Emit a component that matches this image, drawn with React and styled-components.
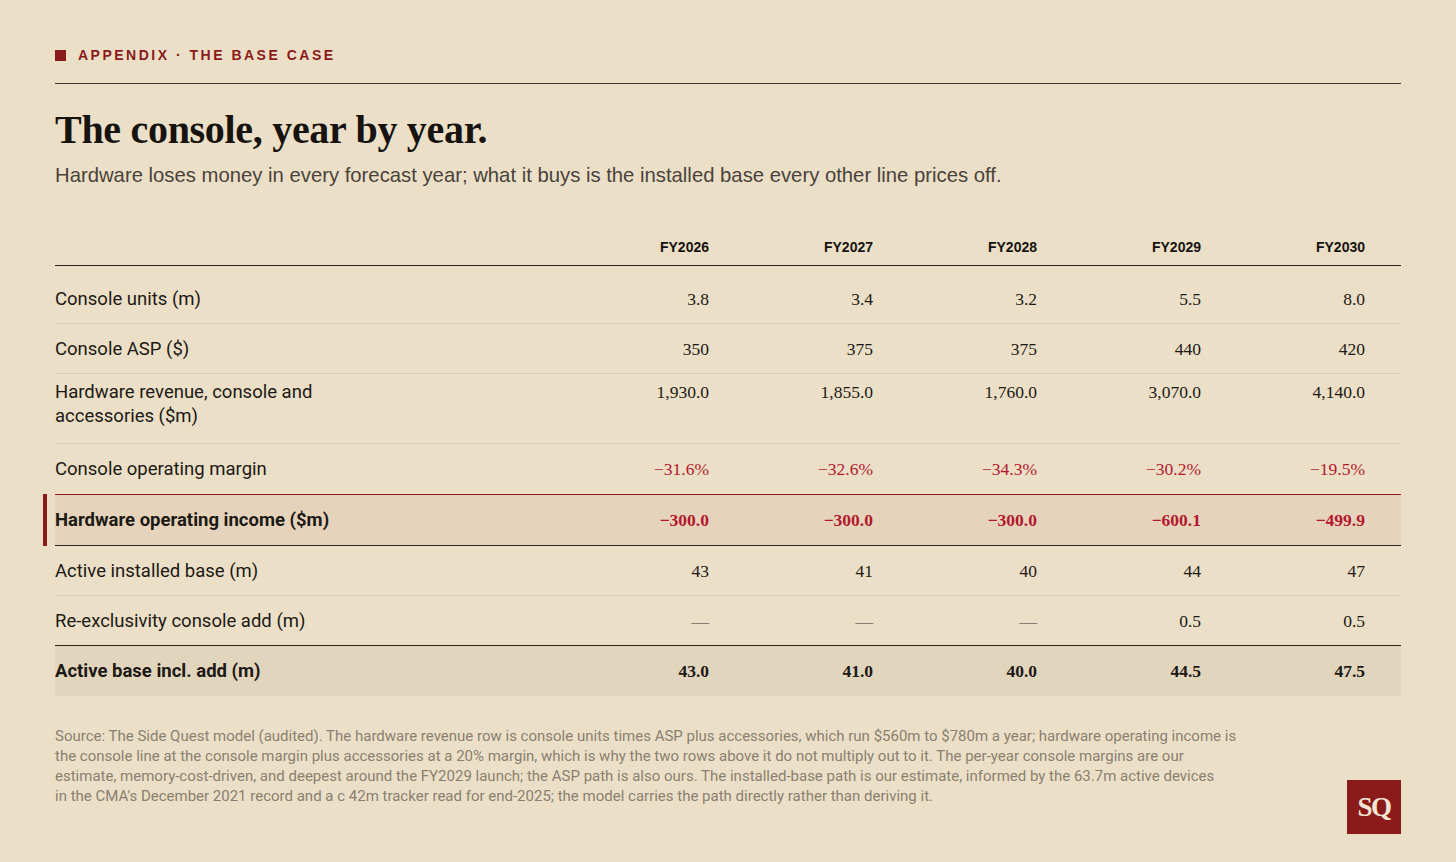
import React from 'react'
import styled, { createGlobalStyle } from 'styled-components'

const Global = createGlobalStyle`
  html, body {
    margin: 0;
    padding: 0;
    background: #EBDFC7;
  }
`

const Page = styled.div`
  width: 1456px;
  height: 862px;
  box-sizing: border-box;
  padding: 46px 55px 0 55px;
  background: #EBDFC7;
  color: #1a1612;
  font-family: Roboto, "Liberation Sans", sans-serif;
`

const Eyebrow = styled.div`
  display: flex;
  align-items: center;
  gap: 12px;
  height: 18px;
  padding-bottom: 19px;
  border-bottom: 1.5px solid #3b342b;
  font-family: "Liberation Sans", Arial, sans-serif;
  font-size: 14px;
  font-weight: 700;
  letter-spacing: 2.5px;
  color: #8B1A1A;
`

const Square = styled.span`
  width: 11px;
  height: 11px;
  background: #8B1A1A;
`

const Title = styled.h1`
  margin: 22px 0 0 0;
  font-family: "Liberation Serif", "DejaVu Serif", serif;
  font-size: 40px;
  line-height: 48px;
  font-weight: 700;
  letter-spacing: -0.3px;
  color: #17130f;
`

const Sub = styled.p`
  margin: 8px 0 0 0;
  font-family: "Liberation Sans", Arial, sans-serif;
  font-size: 20.3px;
  line-height: 26px;
  color: #4a433b;
`

const Table = styled.div`
  margin-top: 51px;
`

const Row = styled.div`
  position: relative;
  display: grid;
  grid-template-columns: 490px repeat(5, 164px) 1fr;
  align-items: ${p => (p.$top ? 'start' : 'center')};
  min-height: ${p => p.$h || 50}px;
  box-sizing: border-box;
  padding-top: ${p => p.$pt || 0}px;
  border-bottom: ${p => p.$border || '1px solid #d9cbb1'};
  background: ${p => p.$bg || 'transparent'};
`

const HeadRow = styled(Row)`
  min-height: 0;
  padding-bottom: 10px;
  border-bottom: 1.5px solid #2b251e;
`

const HiRow = styled(Row)`
  border-top: 1px solid #8B1A1A;
  &::before {
    content: '';
    position: absolute;
    left: -12px;
    top: -1px;
    bottom: -1px;
    width: 4px;
    background: #8B1A1A;
  }
`

const Head = styled.div`
  text-align: right;
  font-family: "Liberation Sans", Arial, sans-serif;
  font-size: 14px;
  font-weight: 700;
  color: #17130f;
`

const Label = styled.div`
  max-width: 300px;
  font-size: 18.5px;
  line-height: 24px;
  font-weight: ${p => (p.$bold ? 700 : 400)};
  color: #1d1914;
  padding: ${p => (p.$top ? '6px 0 11px' : '0')};
`

const Val = styled.div`
  text-align: right;
  font-family: "Liberation Serif", "DejaVu Serif", serif;
  font-size: 17.5px;
  line-height: 24px;
  font-weight: ${p => (p.$bold ? 700 : 400)};
  color: ${p => (p.$neg ? '#B3182E' : p.$dash ? '#8a8174' : '#1d1914')};
  padding-top: ${p => (p.$top ? '6px' : '0')};
`

const Note = styled.p`
  margin: 30px 0 0 0;
  max-width: 1220px;
  font-size: 15px;
  line-height: 20px;
  color: #8a7f70;
`

const Bottom = styled.div`
  display: flex;
  justify-content: space-between;
  align-items: flex-start;
`

const Logo = styled.div`
  flex: none;
  width: 54px;
  height: 54px;
  margin-top: 84px;
  background: #8B1A1A;
  display: flex;
  align-items: center;
  justify-content: center;
  font-family: "Liberation Serif", "DejaVu Serif", serif;
  font-weight: 700;
  font-size: 27px;
  letter-spacing: -1.5px;
  color: #f1e6d3;
`

const years = ['FY2026', 'FY2027', 'FY2028', 'FY2029', 'FY2030']

const rows = [
  { label: 'Console units (m)', vals: ['3.8', '3.4', '3.2', '5.5', '8.0'], pt: 8, h: 58 },
  { label: 'Console ASP ($)', vals: ['350', '375', '375', '440', '420'] },
  { label: 'Hardware revenue, console and accessories ($m)', vals: ['1,930.0', '1,855.0', '1,760.0', '3,070.0', '4,140.0'], top: true, h: 70 },
  { label: 'Console operating margin', vals: ['\u221231.6%', '\u221232.6%', '\u221234.3%', '\u221230.2%', '\u221219.5%'], neg: true, border: 'none' },
  { label: 'Hardware operating income ($m)', vals: ['\u2212300.0', '\u2212300.0', '\u2212300.0', '\u2212600.1', '\u2212499.9'], neg: true, bold: true, hi: true },
  { label: 'Active installed base (m)', vals: ['43', '41', '40', '44', '47'] },
  { label: 'Re-exclusivity console add (m)', vals: ['\u2014', '\u2014', '\u2014', '0.5', '0.5'], border: '1.5px solid #2b251e' },
  { label: 'Active base incl. add (m)', vals: ['43.0', '41.0', '40.0', '44.5', '47.5'], bold: true, bg: '#E2D5BE', border: 'none' },
]

const Cells = ({ r }) => (
  <>
    <Label $bold={r.bold} $top={r.top}>{r.label}</Label>
    {r.vals.map((v, i) => (
      <Val key={i} $bold={r.bold} $neg={r.neg} $dash={v === '\u2014'} $top={r.top}>{v}</Val>
    ))}
  </>
)

export default function App() {
  return (
    <Page>
      <Global />
      <Eyebrow><Square />APPENDIX · THE BASE CASE</Eyebrow>
      <Title>The console, year by year.</Title>
      <Sub>Hardware loses money in every forecast year; what it buys is the installed base every other line prices off.</Sub>
      <Table>
        <HeadRow>
          <div />
          {years.map(y => <Head key={y}>{y}</Head>)}
        </HeadRow>
        {rows.map(r =>
          r.hi ? (
            <HiRow key={r.label} $bg="#E5D3BB" $border="1.5px solid #2b251e" $h={52}>
              <Cells r={r} />
            </HiRow>
          ) : (
            <Row key={r.label} $top={r.top} $h={r.h} $pt={r.pt} $bg={r.bg} $border={r.border}>
              <Cells r={r} />
            </Row>
          )
        )}
      </Table>
      <Bottom>
        <Note>
          Source: The Side Quest model (audited). The hardware revenue row is console units times ASP plus accessories, which run $560m to $780m a year; hardware operating income is<br />
          the console line at the console margin plus accessories at a 20% margin, which is why the two rows above it do not multiply out to it. The per-year console margins are our<br />
          estimate, memory-cost-driven, and deepest around the FY2029 launch; the ASP path is also ours. The installed-base path is our estimate, informed by the 63.7m active devices<br />
          in the CMA's December 2021 record and a c 42m tracker read for end-2025; the model carries the path directly rather than deriving it.
        </Note>
        <Logo>SQ</Logo>
      </Bottom>
    </Page>
  )
}
